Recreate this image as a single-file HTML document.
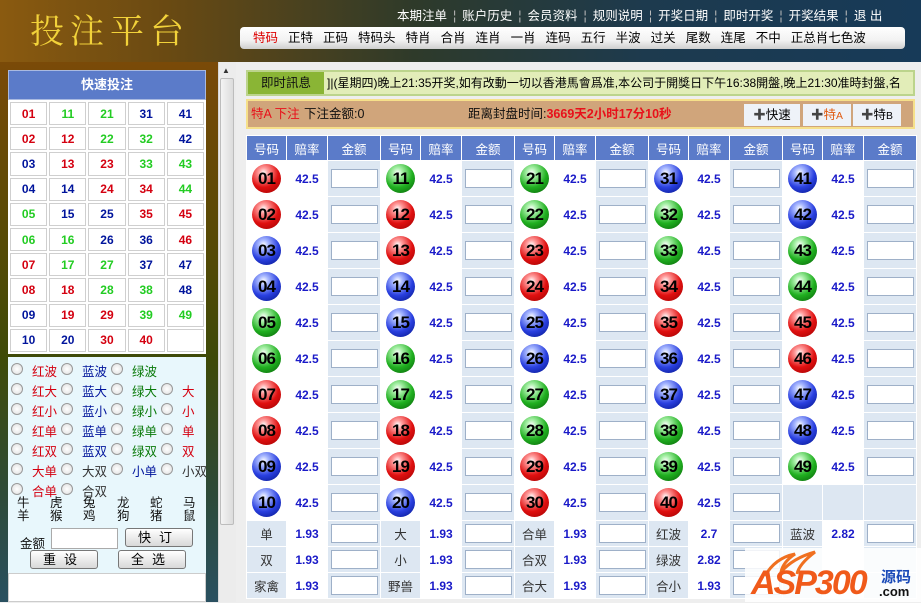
<!DOCTYPE html>
<html><head><meta charset="utf-8">
<style>
*{margin:0;padding:0;box-sizing:border-box}
body{width:921px;height:602px;overflow:hidden;position:relative;font-family:"Liberation Sans","Noto Sans CJK SC",sans-serif;font-size:12px;background:#eeeeee}
.abs{position:absolute}
#hdr{left:0;top:0;width:921px;height:62px;background:linear-gradient(90deg,#8a5a10 0%,#6a4a12 18%,#2e3a2a 45%,#1d3a4e 70%,#173a58 100%)}
#logo{left:30px;top:4px;font-size:34px;color:#f2d23a;letter-spacing:6px;font-family:"Noto Serif CJK SC",serif}
#top{left:393px;top:5px;color:#fff;font-size:12.5px;white-space:nowrap}
#top span{margin:0 4px}
#top i{font-style:normal;color:#bbb;margin:0 2px}
#tabs{left:240px;top:27px;width:665px;height:22px;border-radius:4px;background:linear-gradient(#fff,#f2f2f2 60%,#cfcfcf);white-space:nowrap;font-size:12.5px;padding-left:13px;line-height:22px}
#tabs span{margin-right:10px;color:#000}
#left{left:0;top:62px;width:218px;height:540px;background:linear-gradient(#7a4a08 0%,#5a4a06 30%,#3e4a08 55%,#2d4a38 80%,#2a5060 100%)}
#sb{left:218px;top:62px;width:18px;height:540px;background:#ececec;border-left:1px solid #d8d8d8}
#thumb{left:220px;top:78px;width:14px;height:447px;background:linear-gradient(90deg,#f4f4f4,#dcdcdc);border:1px solid #bdbdbd;border-radius:2px}
#qt{left:8px;top:70px;width:198px;height:30px;background:#5b7bc9;border:1px solid #a9b9e0;color:#fff;font-weight:bold;font-size:13px;text-align:center;line-height:28px}
#grid{left:8px;top:100px;width:198px;background:#fff;border-collapse:separate;border-spacing:2px}
#grid td{width:37px;height:23.2px;border:1px solid #cfcfcf;text-align:center;font-weight:bold;font-size:12px}
.r{color:#d40010}.b{color:#00149c}.g{color:#22cc22}
#opt{left:8px;top:357px;width:198px;height:216px;background:#e8f7fc}
.rd{position:absolute;width:12px;height:12px;border-radius:50%;border:1px solid #999;background:radial-gradient(#fff,#ddd)}
.lb{position:absolute;font-size:12.5px;white-space:nowrap}
.btn{position:absolute;height:19px;border:1px solid #777;border-radius:3px;background:linear-gradient(#fff,#d8d8d8);text-align:center;font-size:13px;line-height:17px;letter-spacing:8px}
#ta{left:8px;top:573px;width:198px;height:29px;background:#fff;border:1px solid #ccc}
#info{left:246px;top:70px;width:669px;height:26px;border:2px solid #bcd48c;background:#e2edb8;white-space:nowrap;overflow:hidden;font-size:12px;line-height:22px}
#info b{display:inline-block;width:76px;height:22px;background:#8ab535;font-weight:normal;text-align:center;margin-right:3px;color:#111;font-size:12.5px}
#bet{left:246px;top:99px;width:669px;height:30px;border:2px solid #f6e08a;background:#d0a57b;font-size:12.5px;line-height:26px}
.bb{position:absolute;top:3px;height:22px;background:#eef2f8;font-size:12.5px;line-height:22px;text-align:center}
#main{left:246px;top:135px;border-collapse:collapse;table-layout:fixed}
#main td{border:1px solid #fff;text-align:center;padding:0}
#main th{background:#5b7bc9;color:#fff;font-weight:normal;height:25px;border:1px solid #fff;font-size:12.5px}
#main .n{width:40px;height:36px;background:#fff}
#main .o{width:41px;background:#fff;color:#1a1ac8;font-weight:bold;font-size:12px}
#main .a{width:53px;background:#dde7f2}
#main .l{background:#dde7f2;color:#333;font-size:12.5px}
#main tr.s td{height:26px}
.in{display:inline-block;width:47px;height:19px;background:#fff;border:1px solid #9eb0c8;vertical-align:middle}
.ball{display:inline-block;width:29px;height:29px;border-radius:50%;font-weight:bold;font-size:17px;line-height:29px;color:#000;vertical-align:middle;letter-spacing:-1px}
.R{background:radial-gradient(circle at 40% 30%,#fff 0,#ff9a9a 18%,#e01010 55%,#900 100%)}
.B{background:radial-gradient(circle at 40% 30%,#fff 0,#a8b8ff 18%,#2a40e0 55%,#001080 100%)}
.G{background:radial-gradient(circle at 40% 30%,#fff 0,#a8f0a8 18%,#20b020 55%,#065a06 100%)}
#wm{left:745px;top:548px;width:176px;height:54px;background:rgba(255,255,255,.85)}
</style></head><body>
<div id="hdr" class="abs"></div>
<div id="logo" class="abs">投注平台</div>
<div id="top" class="abs"><span>本期注单</span><i>¦</i><span>账户历史</span><i>¦</i><span>会员资料</span><i>¦</i><span>规则说明</span><i>¦</i><span>开奖日期</span><i>¦</i><span>即时开奖</span><i>¦</i><span>开奖结果</span><i>¦</i><span>退 出</span></div>
<div id="tabs" class="abs"><span style="color:#d00">特码</span><span>正特</span><span>正码</span><span>特码头</span><span>特肖</span><span>合肖</span><span>连肖</span><span>一肖</span><span>连码</span><span>五行</span><span>半波</span><span>过关</span><span>尾数</span><span>连尾</span><span>不中</span><span>正总肖七色波</span></div>
<div id="left" class="abs"></div>
<div id="sb" class="abs"></div>
<div class="abs" style="left:222px;top:66px;font-size:8px;color:#333">▲</div>
<div id="thumb" class="abs"></div>
<div id="qt" class="abs">快速投注</div>
<table id="grid" class="abs">
<tr><td class="r">01</td><td class="g">11</td><td class="g">21</td><td class="b">31</td><td class="b">41</td></tr>
<tr><td class="r">02</td><td class="r">12</td><td class="g">22</td><td class="g">32</td><td class="b">42</td></tr>
<tr><td class="b">03</td><td class="r">13</td><td class="r">23</td><td class="g">33</td><td class="g">43</td></tr>
<tr><td class="b">04</td><td class="b">14</td><td class="r">24</td><td class="r">34</td><td class="g">44</td></tr>
<tr><td class="g">05</td><td class="b">15</td><td class="b">25</td><td class="r">35</td><td class="r">45</td></tr>
<tr><td class="g">06</td><td class="g">16</td><td class="b">26</td><td class="b">36</td><td class="r">46</td></tr>
<tr><td class="r">07</td><td class="g">17</td><td class="g">27</td><td class="b">37</td><td class="b">47</td></tr>
<tr><td class="r">08</td><td class="r">18</td><td class="g">28</td><td class="g">38</td><td class="b">48</td></tr>
<tr><td class="b">09</td><td class="r">19</td><td class="r">29</td><td class="g">39</td><td class="g">49</td></tr>
<tr><td class="b">10</td><td class="b">20</td><td class="r">30</td><td class="r">40</td><td></td></tr>
</table>
<div id="opt" class="abs">
<div class="rd" style="left:3px;top:6px"></div><div class="lb" style="left:24px;top:4px;color:#d40010">红波</div>
<div class="rd" style="left:53px;top:6px"></div><div class="lb" style="left:74px;top:4px;color:#00149c">蓝波</div>
<div class="rd" style="left:103px;top:6px"></div><div class="lb" style="left:124px;top:4px;color:#0a7a0a">绿波</div>

<div class="rd" style="left:3px;top:26px"></div><div class="lb" style="left:24px;top:24px;color:#d40010">红大</div>
<div class="rd" style="left:53px;top:26px"></div><div class="lb" style="left:74px;top:24px;color:#00149c">蓝大</div>
<div class="rd" style="left:103px;top:26px"></div><div class="lb" style="left:124px;top:24px;color:#0a7a0a">绿大</div>
<div class="rd" style="left:153px;top:26px"></div><div class="lb" style="left:174px;top:24px;color:#d40010">大</div>

<div class="rd" style="left:3px;top:46px"></div><div class="lb" style="left:24px;top:44px;color:#d40010">红小</div>
<div class="rd" style="left:53px;top:46px"></div><div class="lb" style="left:74px;top:44px;color:#00149c">蓝小</div>
<div class="rd" style="left:103px;top:46px"></div><div class="lb" style="left:124px;top:44px;color:#0a7a0a">绿小</div>
<div class="rd" style="left:153px;top:46px"></div><div class="lb" style="left:174px;top:44px;color:#d40010">小</div>

<div class="rd" style="left:3px;top:66px"></div><div class="lb" style="left:24px;top:64px;color:#d40010">红单</div>
<div class="rd" style="left:53px;top:66px"></div><div class="lb" style="left:74px;top:64px;color:#00149c">蓝单</div>
<div class="rd" style="left:103px;top:66px"></div><div class="lb" style="left:124px;top:64px;color:#0a7a0a">绿单</div>
<div class="rd" style="left:153px;top:66px"></div><div class="lb" style="left:174px;top:64px;color:#d40010">单</div>

<div class="rd" style="left:3px;top:86px"></div><div class="lb" style="left:24px;top:84px;color:#d40010">红双</div>
<div class="rd" style="left:53px;top:86px"></div><div class="lb" style="left:74px;top:84px;color:#00149c">蓝双</div>
<div class="rd" style="left:103px;top:86px"></div><div class="lb" style="left:124px;top:84px;color:#0a7a0a">绿双</div>
<div class="rd" style="left:153px;top:86px"></div><div class="lb" style="left:174px;top:84px;color:#d40010">双</div>

<div class="rd" style="left:3px;top:106px"></div><div class="lb" style="left:24px;top:104px;color:#d40010">大单</div>
<div class="rd" style="left:53px;top:106px"></div><div class="lb" style="left:74px;top:104px;color:#333">大双</div>
<div class="rd" style="left:103px;top:106px"></div><div class="lb" style="left:124px;top:104px;color:#00149c">小单</div>
<div class="rd" style="left:153px;top:106px"></div><div class="lb" style="left:174px;top:104px;color:#333">小双</div>

<div class="rd" style="left:3px;top:126px"></div><div class="lb" style="left:24px;top:124px;color:#d40010">合单</div>
<div class="rd" style="left:53px;top:126px"></div><div class="lb" style="left:74px;top:124px;color:#333">合双</div>

<div class="lb" style="left:9px;top:140px;line-height:13px;color:#111">牛<br>羊</div>
<div class="lb" style="left:42px;top:140px;line-height:13px;color:#111">虎<br>猴</div>
<div class="lb" style="left:75px;top:140px;line-height:13px;color:#111">兔<br>鸡</div>
<div class="lb" style="left:109px;top:140px;line-height:13px;color:#111">龙<br>狗</div>
<div class="lb" style="left:142px;top:140px;line-height:13px;color:#111">蛇<br>猪</div>
<div class="lb" style="left:175px;top:140px;line-height:13px;color:#111">马<br>鼠</div>

<div class="lb" style="left:12px;top:176px;color:#111">金额</div>
<div class="abs" style="left:43px;top:171px;width:67px;height:21px;background:#fff;border:1px solid #aaa"></div>
<div class="btn" style="left:117px;top:171px;width:68px">快订</div>
<div class="btn" style="left:22px;top:193px;width:68px">重设</div>
<div class="btn" style="left:110px;top:193px;width:68px">全选</div>
</div>
<div id="ta" class="abs"></div>

<div id="info" class="abs"><b>即时訊息</b>]|(星期四)晚上21:35开奖,如有改動一切以香港馬會爲准,本公司于開獎日下午16:38開盤,晚上21:30准時封盤,名</div>
<div id="bet" class="abs">
<span style="position:absolute;left:3px;color:#e8101a">特A 下注</span>
<span style="position:absolute;left:56px;color:#111">下注金额:0</span>
<span style="position:absolute;left:220px;color:#111">距离封盘时间:<b style="color:#e8101a">3669天2小时17分10秒</b></span>
<div class="bb" style="left:496px;width:56px"><b style="color:#444">✚</b>快速</div>
<div class="bb" style="left:555px;width:48px;color:#e05a10"><b style="color:#444">✚</b>特<small>A</small></div>
<div class="bb" style="left:605px;width:48px"><b style="color:#444">✚</b>特<small>B</small></div>
</div>

<table id="main" class="abs">
<tr><th>号码</th><th>赔率</th><th>金额</th><th>号码</th><th>赔率</th><th>金额</th><th>号码</th><th>赔率</th><th>金额</th><th>号码</th><th>赔率</th><th>金额</th><th>号码</th><th>赔率</th><th>金额</th></tr>
<tr><td class="n"><span class="ball R">01</span></td><td class="o">42.5</td><td class="a"><span class="in"></span></td><td class="n"><span class="ball G">11</span></td><td class="o">42.5</td><td class="a"><span class="in"></span></td><td class="n"><span class="ball G">21</span></td><td class="o">42.5</td><td class="a"><span class="in"></span></td><td class="n"><span class="ball B">31</span></td><td class="o">42.5</td><td class="a"><span class="in"></span></td><td class="n"><span class="ball B">41</span></td><td class="o">42.5</td><td class="a"><span class="in"></span></td></tr>
<tr><td class="n"><span class="ball R">02</span></td><td class="o">42.5</td><td class="a"><span class="in"></span></td><td class="n"><span class="ball R">12</span></td><td class="o">42.5</td><td class="a"><span class="in"></span></td><td class="n"><span class="ball G">22</span></td><td class="o">42.5</td><td class="a"><span class="in"></span></td><td class="n"><span class="ball G">32</span></td><td class="o">42.5</td><td class="a"><span class="in"></span></td><td class="n"><span class="ball B">42</span></td><td class="o">42.5</td><td class="a"><span class="in"></span></td></tr>
<tr><td class="n"><span class="ball B">03</span></td><td class="o">42.5</td><td class="a"><span class="in"></span></td><td class="n"><span class="ball R">13</span></td><td class="o">42.5</td><td class="a"><span class="in"></span></td><td class="n"><span class="ball R">23</span></td><td class="o">42.5</td><td class="a"><span class="in"></span></td><td class="n"><span class="ball G">33</span></td><td class="o">42.5</td><td class="a"><span class="in"></span></td><td class="n"><span class="ball G">43</span></td><td class="o">42.5</td><td class="a"><span class="in"></span></td></tr>
<tr><td class="n"><span class="ball B">04</span></td><td class="o">42.5</td><td class="a"><span class="in"></span></td><td class="n"><span class="ball B">14</span></td><td class="o">42.5</td><td class="a"><span class="in"></span></td><td class="n"><span class="ball R">24</span></td><td class="o">42.5</td><td class="a"><span class="in"></span></td><td class="n"><span class="ball R">34</span></td><td class="o">42.5</td><td class="a"><span class="in"></span></td><td class="n"><span class="ball G">44</span></td><td class="o">42.5</td><td class="a"><span class="in"></span></td></tr>
<tr><td class="n"><span class="ball G">05</span></td><td class="o">42.5</td><td class="a"><span class="in"></span></td><td class="n"><span class="ball B">15</span></td><td class="o">42.5</td><td class="a"><span class="in"></span></td><td class="n"><span class="ball B">25</span></td><td class="o">42.5</td><td class="a"><span class="in"></span></td><td class="n"><span class="ball R">35</span></td><td class="o">42.5</td><td class="a"><span class="in"></span></td><td class="n"><span class="ball R">45</span></td><td class="o">42.5</td><td class="a"><span class="in"></span></td></tr>
<tr><td class="n"><span class="ball G">06</span></td><td class="o">42.5</td><td class="a"><span class="in"></span></td><td class="n"><span class="ball G">16</span></td><td class="o">42.5</td><td class="a"><span class="in"></span></td><td class="n"><span class="ball B">26</span></td><td class="o">42.5</td><td class="a"><span class="in"></span></td><td class="n"><span class="ball B">36</span></td><td class="o">42.5</td><td class="a"><span class="in"></span></td><td class="n"><span class="ball R">46</span></td><td class="o">42.5</td><td class="a"><span class="in"></span></td></tr>
<tr><td class="n"><span class="ball R">07</span></td><td class="o">42.5</td><td class="a"><span class="in"></span></td><td class="n"><span class="ball G">17</span></td><td class="o">42.5</td><td class="a"><span class="in"></span></td><td class="n"><span class="ball G">27</span></td><td class="o">42.5</td><td class="a"><span class="in"></span></td><td class="n"><span class="ball B">37</span></td><td class="o">42.5</td><td class="a"><span class="in"></span></td><td class="n"><span class="ball B">47</span></td><td class="o">42.5</td><td class="a"><span class="in"></span></td></tr>
<tr><td class="n"><span class="ball R">08</span></td><td class="o">42.5</td><td class="a"><span class="in"></span></td><td class="n"><span class="ball R">18</span></td><td class="o">42.5</td><td class="a"><span class="in"></span></td><td class="n"><span class="ball G">28</span></td><td class="o">42.5</td><td class="a"><span class="in"></span></td><td class="n"><span class="ball G">38</span></td><td class="o">42.5</td><td class="a"><span class="in"></span></td><td class="n"><span class="ball B">48</span></td><td class="o">42.5</td><td class="a"><span class="in"></span></td></tr>
<tr><td class="n"><span class="ball B">09</span></td><td class="o">42.5</td><td class="a"><span class="in"></span></td><td class="n"><span class="ball R">19</span></td><td class="o">42.5</td><td class="a"><span class="in"></span></td><td class="n"><span class="ball R">29</span></td><td class="o">42.5</td><td class="a"><span class="in"></span></td><td class="n"><span class="ball G">39</span></td><td class="o">42.5</td><td class="a"><span class="in"></span></td><td class="n"><span class="ball G">49</span></td><td class="o">42.5</td><td class="a"><span class="in"></span></td></tr>
<tr><td class="n"><span class="ball B">10</span></td><td class="o">42.5</td><td class="a"><span class="in"></span></td><td class="n"><span class="ball B">20</span></td><td class="o">42.5</td><td class="a"><span class="in"></span></td><td class="n"><span class="ball R">30</span></td><td class="o">42.5</td><td class="a"><span class="in"></span></td><td class="n"><span class="ball R">40</span></td><td class="o">42.5</td><td class="a"><span class="in"></span></td><td class="n" style="background:#dde7f2"></td><td class="o" style="background:#dde7f2"></td><td class="a"></td></tr>
<tr class="s"><td class="l">单</td><td class="o">1.93</td><td class="a"><span class="in"></span></td><td class="l">大</td><td class="o">1.93</td><td class="a"><span class="in"></span></td><td class="l">合单</td><td class="o">1.93</td><td class="a"><span class="in"></span></td><td class="l">红波</td><td class="o">2.7</td><td class="a"><span class="in"></span></td><td class="l">蓝波</td><td class="o">2.82</td><td class="a"><span class="in"></span></td></tr>
<tr class="s"><td class="l">双</td><td class="o">1.93</td><td class="a"><span class="in"></span></td><td class="l">小</td><td class="o">1.93</td><td class="a"><span class="in"></span></td><td class="l">合双</td><td class="o">1.93</td><td class="a"><span class="in"></span></td><td class="l">绿波</td><td class="o">2.82</td><td class="a"><span class="in"></span></td><td class="l"></td><td class="o"></td><td class="a"></td></tr>
<tr class="s"><td class="l">家禽</td><td class="o">1.93</td><td class="a"><span class="in"></span></td><td class="l">野兽</td><td class="o">1.93</td><td class="a"><span class="in"></span></td><td class="l">合大</td><td class="o">1.93</td><td class="a"><span class="in"></span></td><td class="l">合小</td><td class="o">1.93</td><td class="a"><span class="in"></span></td><td class="l"></td><td class="o"></td><td class="a"></td></tr>
</table>
<div id="wm" class="abs">
<svg width="176" height="54" style="position:absolute;left:0;top:0"><path d="M20 28 Q30 10 50 6 Q38 14 36 24 Q48 10 70 4 Q54 16 52 26" fill="none" stroke="#f07020" stroke-width="3"/></svg>
<div class="abs" style="left:6px;top:16px;font-size:34px;font-weight:bold;font-style:italic;color:#f05a1a;letter-spacing:-2px;font-family:'Liberation Sans',sans-serif">ASP300</div>
<div class="abs" style="left:136px;top:18px;font-size:15px;font-weight:bold;color:#1a4ab8">源码</div>
<div class="abs" style="left:134px;top:36px;font-size:13px;font-weight:bold;color:#111">.com</div>
</div>
</body></html>
